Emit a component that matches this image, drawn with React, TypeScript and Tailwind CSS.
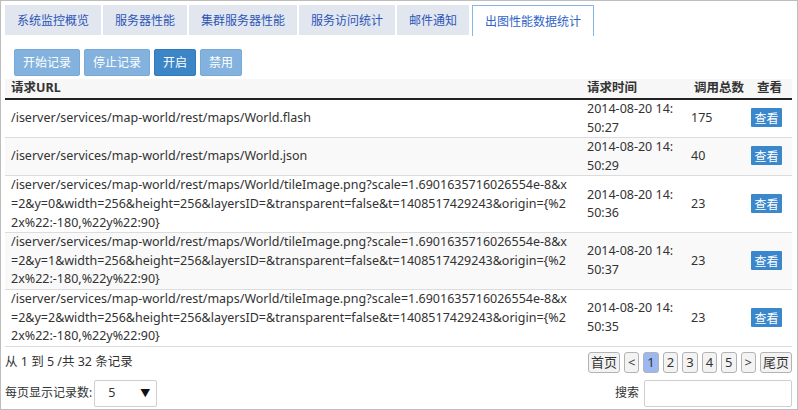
const tabs = ["系统监控概览", "服务器性能", "集群服务器性能", "服务访问统计", "邮件通知"];

type Row = { url: string[]; time: string[]; count: string; shade: boolean };

const tileLines = (y: number) => [
  "/iserver/services/map-world/rest/maps/World/tileImage.png?scale=1.6901635716026554e-8&x",
  `=2&y=${y}&width=256&height=256&layersID=&transparent=false&t=1408517429243&origin={%2`,
  "2x%22:-180,%22y%22:90}",
];

const rows: Row[] = [
  { url: ["/iserver/services/map-world/rest/maps/World.flash"], time: ["2014-08-20 14:", "50:27"], count: "175", shade: false },
  { url: ["/iserver/services/map-world/rest/maps/World.json"], time: ["2014-08-20 14:", "50:29"], count: "40", shade: true },
  { url: tileLines(0), time: ["2014-08-20 14:", "50:36"], count: "23", shade: false },
  { url: tileLines(1), time: ["2014-08-20 14:", "50:37"], count: "23", shade: true },
  { url: tileLines(2), time: ["2014-08-20 14:", "50:35"], count: "23", shade: false },
];

const pages = ["首页", "<", "1", "2", "3", "4", "5", ">", "尾页"];

export default function App() {
  return (
    <div className="w-[798px] h-[410px] bg-white border border-[#bdbdbd] pt-[4px] px-[4px] text-[#333] font-['Noto_Sans','Noto_Sans_CJK_SC',sans-serif] text-[12.5px] leading-[18.6px] overflow-hidden">
      {/* tabs */}
      <div className="flex gap-[2px] h-[31px]">
        {tabs.map((t) => (
          <div key={t} className="h-[30px] px-[12px] flex items-center bg-[#e2e7ef] text-[#2c55b8] text-[12px] font-['Noto_Sans_CJK_SC',sans-serif]">
            {t}
          </div>
        ))}
        <div className="h-[31px] ml-[1px] px-[12px] flex items-center bg-white border border-b-0 border-[#86b5e6] text-[#2f63c8] text-[12px] font-['Noto_Sans_CJK_SC',sans-serif]">
          出图性能数据统计
        </div>
      </div>

      {/* action buttons */}
      <div className="flex gap-[4px] pl-[9px] mt-[13px] text-[12px] font-['Noto_Sans_CJK_SC',sans-serif]">
        <button className="h-[27px] px-[8px] rounded-[2px] bg-[#82b2dd] border border-[#78a9d6] text-white">开始记录</button>
        <button className="h-[27px] px-[8px] rounded-[2px] bg-[#82b2dd] border border-[#78a9d6] text-white">停止记录</button>
        <button className="h-[27px] px-[8px] rounded-[2px] bg-[#3c86c8] border border-[#3479b9] text-white">开启</button>
        <button className="h-[27px] px-[8px] rounded-[2px] bg-[#82b2dd] border border-[#78a9d6] text-white">禁用</button>
      </div>

      {/* table */}
      <div className="mt-[3px] w-[787px]">
        <div className="grid grid-cols-[576px_104px_60px_47px] h-[21px] bg-[#f7f7f7] border-b-2 border-[#222] font-bold text-[12.5px] items-center whitespace-nowrap">
          <div className="pl-[6px]">请求URL</div>
          <div className="pl-[6px]">请求时间</div>
          <div className="pl-[9px]">调用总数</div>
          <div className="pl-[12px]">查看</div>
        </div>
        {rows.map((r, i) => (
          <div
            key={i}
            className={`grid grid-cols-[576px_104px_60px_47px] items-center border-b border-[#dcdcdc] ${r.shade ? "bg-[#f9f9f9]" : "bg-white"}`}
          >
            <div className="pl-[6px] whitespace-nowrap">
              {r.url.map((l, j) => (
                <div key={j}>{l}</div>
              ))}
            </div>
            <div className="pl-[6px] whitespace-nowrap">
              {r.time.map((l, j) => (
                <div key={j}>{l}</div>
              ))}
            </div>
            <div className="pl-[6px]">{r.count}</div>
            <div className="pl-[6px]">
              <button className="w-[31px] h-[19px] bg-[#3b87cc] text-white text-[12px] leading-[19px] rounded-[1px] font-['Noto_Sans_CJK_SC',sans-serif]">
                查看
              </button>
            </div>
          </div>
        ))}
      </div>

      {/* footer */}
      <div className="flex items-center justify-between w-[787px] mt-[5px] h-[21px]">
        <div>从 1 到 5 /共 32 条记录</div>
        <div className="flex gap-[4px] text-[13px]">
          {pages.map((p) => (
            <div
              key={p}
              className={`h-[21px] min-w-[15px] flex items-center justify-center rounded-[3px] border border-[#b3b3b3] ${
                p === "1" ? "bg-[#9db7f2]" : "bg-[#f3f3f3]"
              } ${p.length > 1 ? "px-[2px]" : "px-[3px]"}`}
            >
              {p}
            </div>
          ))}
        </div>
      </div>
      <div className="flex items-center justify-between w-[787px] mt-[7px]">
        <div className="flex items-center">
          <span className="text-[12px]">每页显示记录数:</span>
          <div className="ml-[2px] w-[63px] h-[27px] border border-[#cfcfcf] rounded-[2px] flex items-center justify-between pl-[13px] pr-[6px]">
            <span>5</span>
            <span className="text-[10px] text-[#111]">▼</span>
          </div>
        </div>
        <div className="flex items-center gap-[5px]">
          <span className="text-[12px]">搜索</span>
          <div className="w-[148px] h-[27px] border border-[#cfcfcf] rounded-[2px]" />
        </div>
      </div>
    </div>
  );
}
